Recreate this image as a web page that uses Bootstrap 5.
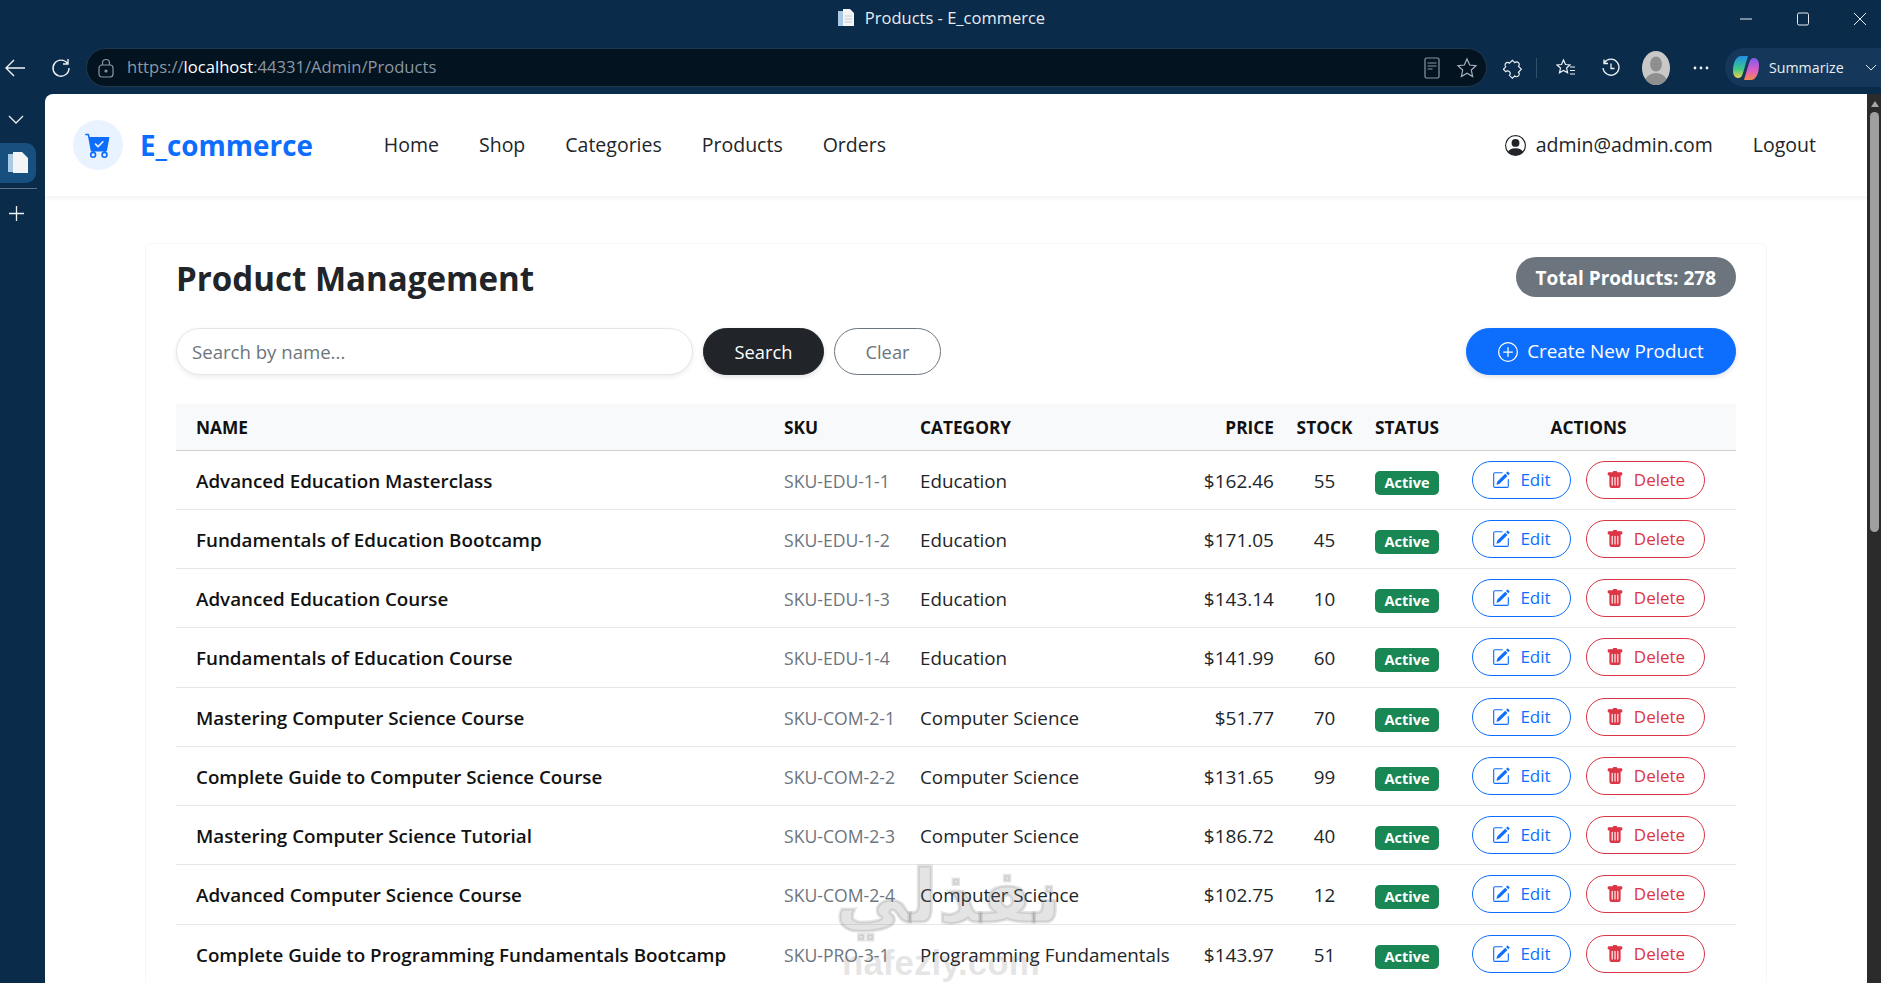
<!DOCTYPE html>
<html lang="en">
<head>
    <meta charset="UTF-8">
    <meta name="viewport" content="width=device-width, initial-scale=1.0">
    <title>Products - E_commerce</title>
    <link href="https://cdn.jsdelivr.net/npm/bootstrap@5.3.0/dist/css/bootstrap.min.css" rel="stylesheet">
    <style>
        html, body { height: 983px; overflow: hidden; }
        body {
            font-family: "Open Sans", "Liberation Sans", sans-serif;
            font-size: 18px;
            background: #0a2b4a;
            color: #212529;
        }
        /* browser frame */
        .title-strip { height: 48px; color: #e8edf2; font-size: 16.5px; position: relative; }
        .title-label { gap: 9px; height: 36px; }
        .win-controls { position: absolute; right: -7px; top: 0; height: 38px; }
        .win-controls svg { display: block; }
        .win-btn { width: 57px; }
        .tool-strip { height: 46px; }
        .tool-strip svg { display: block; flex: none; }
        .nav-icon-slot { height: 39px; flex: none; }
        .back-slot { width: 40px; }
        .reload-slot { width: 41px; margin-right: 5px; }
        .url-bar {
            width: 1401px;
            height: 39px;
            background: #03131f;
            border: 1px solid #20384e;
            border-radius: 20px;
            padding: 0 8px 0 11px;
            font-size: 16.6px;
            color: #8b98a5;
        }
        .url-bar b { font-weight: 400; color: #fff; }
        .url-text { margin-left: 13px; }
        .tool-slot { width: 45px; height: 39px; flex: none; }
        .ext-slot { width: 44px; margin-left: 4px; margin-right: 8px; position: relative; }
        .ext-slot::after { content: ""; position: absolute; right: -2px; top: 10px; height: 20px; width: 1px; background: #33506b; }
        .avatar-round { width: 28px; height: 34px; border-radius: 50%; background: #c9c8c6; overflow: hidden; }
        .summarize-pill {
            width: 156px;
            height: 39px;
            margin-left: 2px;
            background: #15385a;
            border-radius: 20px 0 0 20px;
            padding-left: 7px;
            color: #e8edf2;
            font-size: 14.2px;
            gap: 9px;
        }
        .frame-row { height: 889px; }
        .side-strip { width: 45px; flex: none; padding-top: 21px; }
        .side-tab { width: 36px; height: 40px; margin-top: 18px; background: #17507e; border-radius: 0 10px 10px 0; }
        .side-line { width: 37px; height: 1px; background: #5a7288; margin-top: 5px; }
        .side-plus { margin: 17px 0 0 9px; }
        .page-view { background: #fff; border-radius: 8px 0 0 0; overflow: hidden; min-width: 0; }
        .scroll-strip { width: 14px; background: #2b2b2b; flex: none; padding: 7px 2px 0 3px; }
        .scroll-arrow { width: 0; height: 0; border: 4px solid transparent; border-top: 0; border-bottom: 6px solid #a6a6a6; margin: 0 auto 5px; }
        .scroll-thumb { height: 420px; background: #9f9f9f; border-radius: 5px; }

        /* site navbar */
        .site-nav { height: 102px; padding: 0 51px 0 28px; box-shadow: 0 2px 5px rgba(0,0,0,.06); }
        .brand-dot { width: 50px; height: 50px; border-radius: 50%; background: #e9f2ff; }
        .brand-name { font-size: 27.8px; font-weight: 700; color: #0d6efd; margin: 2px 0 0 17px; line-height: 1; }
        .site-links { margin-left: 71px; gap: 40px; }
        .site-nav .navbar-nav .nav-link { color: #212529; font-size: 19.5px; font-weight: 500; padding: 0; }
        .user-links { gap: 40px; }
        .user-name-link { gap: 10px; }

        /* product panel */
        .panel-box {
            width: 1622px;
            margin: 47px auto 0;
            padding: 13px 30px 0 30px;
            border: 1px solid #f6f7f8;
            border-bottom: 0;
            border-radius: 6px 6px 0 0;
        }
        .panel-title { font-size: 33.1px; font-weight: 700; margin: 1px 0 -1px; line-height: 42px; }
        .total-pill { background: #6c757d; color: #fff; font-size: 19px; font-weight: 700; border-radius: 20px; padding: 0 20px; height: 40px; line-height: 42px; }
        .search-row { margin-top: 29px; height: 47px; }
        .search-box {
            width: 517px;
            height: 47px;
            font-size: 18.6px;
            padding: 0 15px;
            border-color: #e4e6e8;
            box-shadow: 0 2px 5px rgba(0,0,0,.08);
        }
        .search-box::placeholder { color: #6c757d; }
        .pill-btn { height: 47px; font-size: 18.3px; padding: 0; }
        .search-btn { width: 121px; margin-left: 10px; box-shadow: 0 2px 5px rgba(0,0,0,.12); }
        .clear-btn { width: 107px; margin-left: 10px; }
        .create-btn { width: 270px; gap: 9px; font-size: 18.9px; box-shadow: 0 2px 5px rgba(0,0,0,.12); }

        .product-table { table-layout: fixed; width: 1560px; margin: 29px 0 0; font-size: 18.8px; }
        .product-table th, .product-table td { padding: 0 14px; white-space: nowrap; }
        .product-table th {
            height: 46px;
            padding-top: 2px;
            font-size: 17.3px;
            font-weight: 700;
            text-transform: uppercase;
            vertical-align: middle;
            background: #f8f9fa;
            border-bottom: 1px solid #cfd1d3;
            color: #111;
        }
        .product-table td { height: 59px; border-bottom: 1px solid #e6e7e9; padding-top: 3px; }
        .product-table tr:nth-child(4n) td { height: 60px; }
        .product-table th:first-child, .product-table td:first-child { padding-left: 20px; }
        .product-table th:last-child, .product-table td:last-child { padding-right: 31px; }
        .product-table td:last-child { padding-top: 0; }
        .product-table .stock-cell { padding-left: 0; padding-right: 0; }
        .col-name { width: 594px; }
        .col-sku { width: 136px; }
        .col-cat { width: 278px; }
        .col-price { width: 104px; }
        .col-stock { width: 73px; }
        .col-status { width: 97px; }
        .col-act { width: 278px; }
        .item-name { font-weight: 600; color: #111; }
        .product-table .item-sku { color: #6c757d; font-size: 17.6px; }
        .price-cell { font-size: 19px; }
        .state-tag { font-size: 14.5px; font-weight: 700; padding: 0; width: 64px; height: 24px; line-height: 24px; border-radius: 5px; margin-top: 2px; }
        .act-row { gap: 15px; }
        .act-btn { height: 38px; font-size: 17px; padding: 0; gap: 10px; background: #fff; }
        .edit-btn { width: 99px; }
        .del-btn { width: 119px; }
        .soft-mark { position: absolute; color: rgba(120,120,120,.2); pointer-events: none; white-space: nowrap; font-weight: 700; }
        .mark-ar { left: 835px; top: 856px; font-family: "DejaVu Sans", sans-serif; font-size: 74px; line-height: 80px; -webkit-text-stroke: 3px rgba(120,120,120,.2); }
        .mark-en { left: 842px; top: 940px; font-family: "Liberation Sans", sans-serif; font-size: 35px; line-height: 46px; }
    </style>
</head>
<body>
    <!-- Browser title -->
    <div class="title-strip d-flex justify-content-center">
        <div class="title-label d-flex align-items-center">
            <svg width="20" height="20" viewBox="0 0 20 20"><path fill="#a9c9e4" d="M2 3h8v15H2z"/><path fill="#f2f4f6" d="M7 1h7l4 4v13H7z"/><path stroke="#c5ccd3" d="M9 8h7M9 11h7M9 14h7"/></svg>
            <span>Products - E_commerce</span>
        </div>
        <div class="win-controls d-flex align-items-center">
            <div class="win-btn d-flex justify-content-center"><svg width="14" height="14" viewBox="0 0 14 14"><path stroke="#e8edf2" d="M1 7h12"/></svg></div>
            <div class="win-btn d-flex justify-content-center"><svg width="14" height="14" viewBox="0 0 14 14"><rect x="1.5" y="1" width="11" height="12" rx="1.5" fill="none" stroke="#e8edf2"/></svg></div>
            <div class="win-btn d-flex justify-content-center"><svg width="14" height="14" viewBox="0 0 14 14"><path stroke="#e8edf2" d="M1 1l12 12M13 1L1 13"/></svg></div>
        </div>
    </div>

    <!-- Browser toolbar -->
    <div class="tool-strip d-flex">
        <div class="nav-icon-slot back-slot d-flex align-items-center ps-1">
            <svg width="22" height="20" viewBox="0 0 22 20" fill="none" stroke="#eef2f5" stroke-width="1.4"><path d="M21 10H2M10 2l-8 8 8 8"/></svg>
        </div>
        <div class="nav-icon-slot reload-slot d-flex align-items-center justify-content-center">
            <svg width="20" height="20" viewBox="0 0 20 20" fill="none" stroke="#eef2f5" stroke-width="1.4"><path d="M16.5 5.5A8 8 0 1 0 18 10M17 1v5h-5"/></svg>
        </div>
        <div class="url-bar d-flex align-items-center">
            <svg width="16" height="20" viewBox="0 0 16 20" fill="none" stroke="#8b98a5" stroke-width="1.2"><rect x="1" y="7" width="14" height="12" rx="3"/><path d="M4.5 7V5a3.5 3.5 0 0 1 7 0v2"/><circle cx="8" cy="13" r="1" fill="#8b98a5"/></svg>
            <span class="url-text">https://<b>localhost</b>:44331/Admin/Products</span>
            <div class="ms-auto d-flex align-items-center gap-3">
                <svg width="16" height="22" viewBox="0 0 16 22" fill="none" stroke="#8b98a5" stroke-width="1.2"><rect x="1" y="1" width="14" height="20" rx="1.5"/><path d="M3.5 6h9M3.5 9h9M3.5 12h5"/></svg>
                <svg width="22" height="22" viewBox="0 0 22 22" fill="none" stroke="#aab4bd" stroke-width="1.2"><path d="M11 2l2.7 6 6.3.7-4.7 4.3 1.3 6.5L11 16.2 5.4 19.5 6.7 13 2 8.7 8.3 8z"/></svg>
            </div>
        </div>
        <div class="d-flex align-items-start">
            <div class="tool-slot ext-slot d-flex align-items-center justify-content-center">
                <svg width="20" height="22" viewBox="0 0 20 22" fill="none" stroke="#eef2f5" stroke-width="1.3"><path d="M7 5a3 3 0 0 1 6 0h5v5a3 3 0 0 1 0 6v4h-5a3 3 0 0 0-6 0H3v-4a3 3 0 0 1 0-6V5z" transform="rotate(45 10 11) scale(.85) translate(1.8 2)"/></svg>
            </div>
            <div class="tool-slot d-flex align-items-center justify-content-center">
                <svg width="20" height="20" viewBox="0 0 20 20" fill="none" stroke="#eef2f5" stroke-width="1.2"><path d="M7.5 2l2 4.5 4.5.5-3.4 3 1 4.8-4.1-2.4-4 2.4 1-4.8L1 7l4.5-.5zM14 9h5M14 12.5h5M14 16h5"/></svg>
            </div>
            <div class="tool-slot d-flex align-items-center justify-content-center">
                <svg width="20" height="20" viewBox="0 0 20 20" fill="none" stroke="#eef2f5" stroke-width="1.3"><path d="M3.5 4.5A8 8 0 1 1 2 10M3 1.5v4h4M10 5.5V10.5h3.5"/></svg>
            </div>
            <div class="tool-slot d-flex align-items-center justify-content-center">
                <div class="avatar-round">
                    <svg width="28" height="34" viewBox="0 0 28 34"><ellipse cx="14" cy="13" rx="6" ry="7.5" fill="#8f8f8f"/><ellipse cx="14" cy="31" rx="11" ry="9" fill="#8f8f8f"/></svg>
                </div>
            </div>
            <div class="tool-slot d-flex align-items-center justify-content-center">
                <svg width="16" height="4" viewBox="0 0 16 4" fill="#eef2f5"><circle cx="2" cy="2" r="1.4"/><circle cx="8" cy="2" r="1.4"/><circle cx="14" cy="2" r="1.4"/></svg>
            </div>
            <div class="summarize-pill d-flex align-items-center">
                <svg width="28" height="28" viewBox="0 0 28 28">
                    <defs>
                        <linearGradient id="copA" x1="0" y1="0" x2="0" y2="1"><stop offset="0" stop-color="#1f8fe8"/><stop offset=".6" stop-color="#3fc98a"/><stop offset="1" stop-color="#f2d24a"/></linearGradient>
                        <linearGradient id="copB" x1="0" y1="0" x2="0" y2="1"><stop offset="0" stop-color="#7d5cf0"/><stop offset=".6" stop-color="#e45fc0"/><stop offset="1" stop-color="#f38a4c"/></linearGradient>
                    </defs>
                    <path fill="url(#copA)" d="M9 2h7l-5 17c-1 3-2 5-5 5-3 0-5-3-5-7 0-8 3-15 8-15z"/>
                    <path fill="url(#copB)" d="M19 26h-7l5-17c1-3 2-5 5-5 3 0 5 3 5 7 0 8-3 15-8 15z"/>
                </svg>
                <span>Summarize</span>
                <svg class="ms-auto me-1" width="12" height="8" viewBox="0 0 12 8" fill="none" stroke="#dfe5ea"><path d="M1 1l5 5 5-5"/></svg>
            </div>
        </div>
    </div>

    <div class="frame-row d-flex">
        <!-- Browser side tabs -->
        <div class="side-strip">
            <svg class="d-block ms-2" width="16" height="10" viewBox="0 0 16 10" fill="none" stroke="#eef2f5" stroke-width="1.3"><path d="M1 1l7 7 7-7"/></svg>
            <div class="side-tab d-flex align-items-center justify-content-center">
                <svg width="20" height="22" viewBox="0 0 20 22"><path fill="#a9c9e4" d="M0 2h9v18H0z"/><path fill="#f2f4f6" d="M5 0h9l6 6v15H5z"/></svg>
            </div>
            <div class="side-line"></div>
            <svg class="d-block side-plus" width="15" height="15" viewBox="0 0 15 15" stroke="#eef2f5" stroke-width="1.3"><path d="M7.5 0v15M0 7.5h15"/></svg>
        </div>

        <div class="page-view flex-grow-1">
            <nav class="site-nav navbar navbar-expand d-flex align-items-center flex-nowrap">
                <a class="d-flex align-items-center text-decoration-none" href="#">
                    <span class="brand-dot d-flex align-items-center justify-content-center">
                        <svg width="26" height="26" viewBox="0 0 16 16" fill="#0d6efd"><path d="M.5 1a.5.5 0 0 0 0 1h1.110l.401 1.607 1.498 7.985A.5.5 0 0 0 4 12h1a2 2 0 1 0 0 4 2 2 0 0 0 0-4h7a2 2 0 1 0 0 4 2 2 0 0 0 0-4h1a.5.5 0 0 0 .491-.408l1.5-8A.5.5 0 0 0 14.5 3H2.890l-.405-1.621A.5.5 0 0 0 2 1H.5zM6 14a1 1 0 1 1-2 0 1 1 0 0 1 2 0zm7 0a1 1 0 1 1-2 0 1 1 0 0 1 2 0zm-1.646-7.646-3 3a.5.5 0 0 1-.708 0l-1.5-1.5a.5.5 0 1 1 .708-.708L8 8.293l2.646-2.647a.5.5 0 0 1 .708.708z"/></svg>
                    </span>
                    <span class="brand-name">E_commerce</span>
                </a>
                <ul class="site-links navbar-nav flex-row">
                    <li class="nav-item"><a class="nav-link" href="#">Home</a></li>
                    <li class="nav-item"><a class="nav-link" href="#">Shop</a></li>
                    <li class="nav-item"><a class="nav-link" href="#">Categories</a></li>
                    <li class="nav-item"><a class="nav-link" href="#">Products</a></li>
                    <li class="nav-item"><a class="nav-link" href="#">Orders</a></li>
                </ul>
                <ul class="user-links navbar-nav flex-row ms-auto">
                    <li class="nav-item"><a class="user-name-link nav-link d-flex align-items-center" href="#">
                        <svg width="21" height="21" viewBox="0 0 16 16" fill="#212529"><path d="M11 6a3 3 0 1 1-6 0 3 3 0 0 1 6 0z"/><path fill-rule="evenodd" d="M0 8a8 8 0 1 1 16 0A8 8 0 0 1 0 8zm8-7a7 7 0 0 0-5.468 11.370C3.242 11.226 4.805 10 8 10s4.757 1.225 5.468 2.370A7 7 0 0 0 8 1z"/></svg>
                        admin@admin.com</a></li>
                    <li class="nav-item"><a class="nav-link" href="#">Logout</a></li>
                </ul>
            </nav>

            <div class="panel-box">
                <div class="d-flex justify-content-between align-items-start">
                    <h2 class="panel-title">Product Management</h2>
                    <span class="total-pill">Total Products: 278</span>
                </div>
                <div class="search-row d-flex align-items-center">
                    <input class="search-box form-control rounded-pill" type="text" placeholder="Search by name...">
                    <button class="search-btn pill-btn btn btn-dark rounded-pill">Search</button>
                    <button class="clear-btn pill-btn btn btn-outline-secondary rounded-pill">Clear</button>
                    <button class="create-btn pill-btn btn btn-primary rounded-pill ms-auto d-flex align-items-center justify-content-center">
                        <svg width="20" height="20" viewBox="0 0 16 16" fill="#fff"><path d="M8 15A7 7 0 1 1 8 1a7 7 0 0 1 0 14zm0 1A8 8 0 1 0 8 0a8 8 0 0 0 0 16z"/><path d="M8 4a.5.5 0 0 1 .5.5v3h3a.5.5 0 0 1 0 1h-3v3a.5.5 0 0 1-1 0v-3h-3a.5.5 0 0 1 0-1h3v-3A.5.5 0 0 1 8 4z"/></svg>
                        Create New Product
                    </button>
                </div>

                <table class="product-table table align-middle">
                    <colgroup>
                        <col class="col-name"><col class="col-sku"><col class="col-cat"><col class="col-price"><col class="col-stock"><col class="col-status"><col class="col-act">
                    </colgroup>
                    <thead>
                        <tr>
                            <th>Name</th><th>SKU</th><th>Category</th><th class="text-end">Price</th><th class="stock-cell text-center">Stock</th><th>Status</th><th class="text-center">Actions</th>
                        </tr>
                    </thead>
                    <tbody id="productRows"></tbody>
                </table>
            </div>
        </div>

        <div class="scroll-strip">
            <div class="scroll-arrow"></div>
            <div class="scroll-thumb"></div>
        </div>
    </div>

    <!-- Site watermark baked into the screenshot -->
    <div class="soft-mark mark-ar" dir="rtl">نفذلي</div>
    <div class="soft-mark mark-en">nafezly.com</div>

    <script src="https://cdn.jsdelivr.net/npm/bootstrap@5.3.0/dist/js/bootstrap.bundle.min.js"></script>
    <script>
        const products = [
            ['Advanced Education Masterclass', 'SKU-EDU-1-1', 'Education', '$162.46', 55],
            ['Fundamentals of Education Bootcamp', 'SKU-EDU-1-2', 'Education', '$171.05', 45],
            ['Advanced Education Course', 'SKU-EDU-1-3', 'Education', '$143.14', 10],
            ['Fundamentals of Education Course', 'SKU-EDU-1-4', 'Education', '$141.99', 60],
            ['Mastering Computer Science Course', 'SKU-COM-2-1', 'Computer Science', '$51.77', 70],
            ['Complete Guide to Computer Science Course', 'SKU-COM-2-2', 'Computer Science', '$131.65', 99],
            ['Mastering Computer Science Tutorial', 'SKU-COM-2-3', 'Computer Science', '$186.72', 40],
            ['Advanced Computer Science Course', 'SKU-COM-2-4', 'Computer Science', '$102.75', 12],
            ['Complete Guide to Programming Fundamentals Bootcamp', 'SKU-PRO-3-1', 'Programming Fundamentals', '$143.97', 51]
        ];
        const editIcon = '<svg width="18" height="18" viewBox="0 0 16 16" fill="currentColor"><path d="M15.502 1.940a.5.5 0 0 1 0 .706L14.459 3.690l-2-2L13.502.646a.5.5 0 0 1 .707 0l1.293 1.293zm-1.750 2.456-2-2L4.939 9.210a.5.5 0 0 0-.121.196l-.805 2.414a.25.25 0 0 0 .316.316l2.414-.805a.5.5 0 0 0 .196-.12l6.813-6.814z"/><path fill-rule="evenodd" d="M1 13.500A1.500 1.500 0 0 0 2.500 15h11a1.500 1.500 0 0 0 1.500-1.500v-6a.5.5 0 0 0-1 0v6a.5.5 0 0 1-.5.5h-11a.5.5 0 0 1-.5-.5v-11a.5.5 0 0 1 .5-.5H9a.5.5 0 0 0 0-1H2.500A1.500 1.500 0 0 0 1 2.500v11z"/></svg>';
        const trashIcon = '<svg width="18" height="18" viewBox="0 0 16 16" fill="currentColor"><path d="M2.500 1a1 1 0 0 0-1 1v1a1 1 0 0 0 1 1H3v9a2 2 0 0 0 2 2h6a2 2 0 0 0 2-2V4h.5a1 1 0 0 0 1-1V2a1 1 0 0 0-1-1H10a1 1 0 0 0-1-1H7a1 1 0 0 0-1 1H2.500zm3 4a.5.5 0 0 1 .5.5v7a.5.5 0 0 1-1 0v-7a.5.5 0 0 1 .5-.5zM8 5a.5.5 0 0 1 .5.5v7a.5.5 0 0 1-1 0v-7A.5.5 0 0 1 8 5zm3 .5v7a.5.5 0 0 1-1 0v-7a.5.5 0 0 1 1 0z"/></svg>';

        document.getElementById('productRows').innerHTML = products.map(p => `
            <tr>
                <td class="item-name">${p[0]}</td>
                <td class="item-sku">${p[1]}</td>
                <td>${p[2]}</td>
                <td class="price-cell text-end">${p[3]}</td>
                <td class="stock-cell text-center">${p[4]}</td>
                <td><span class="state-tag badge text-bg-success">Active</span></td>
                <td>
                    <div class="act-row d-flex">
                        <a class="edit-btn act-btn btn btn-outline-primary rounded-pill d-flex align-items-center justify-content-center" href="#">${editIcon}Edit</a>
                        <a class="del-btn act-btn btn btn-outline-danger rounded-pill d-flex align-items-center justify-content-center" href="#">${trashIcon}Delete</a>
                    </div>
                </td>
            </tr>`).join('');
    </script>
</body>
</html>
